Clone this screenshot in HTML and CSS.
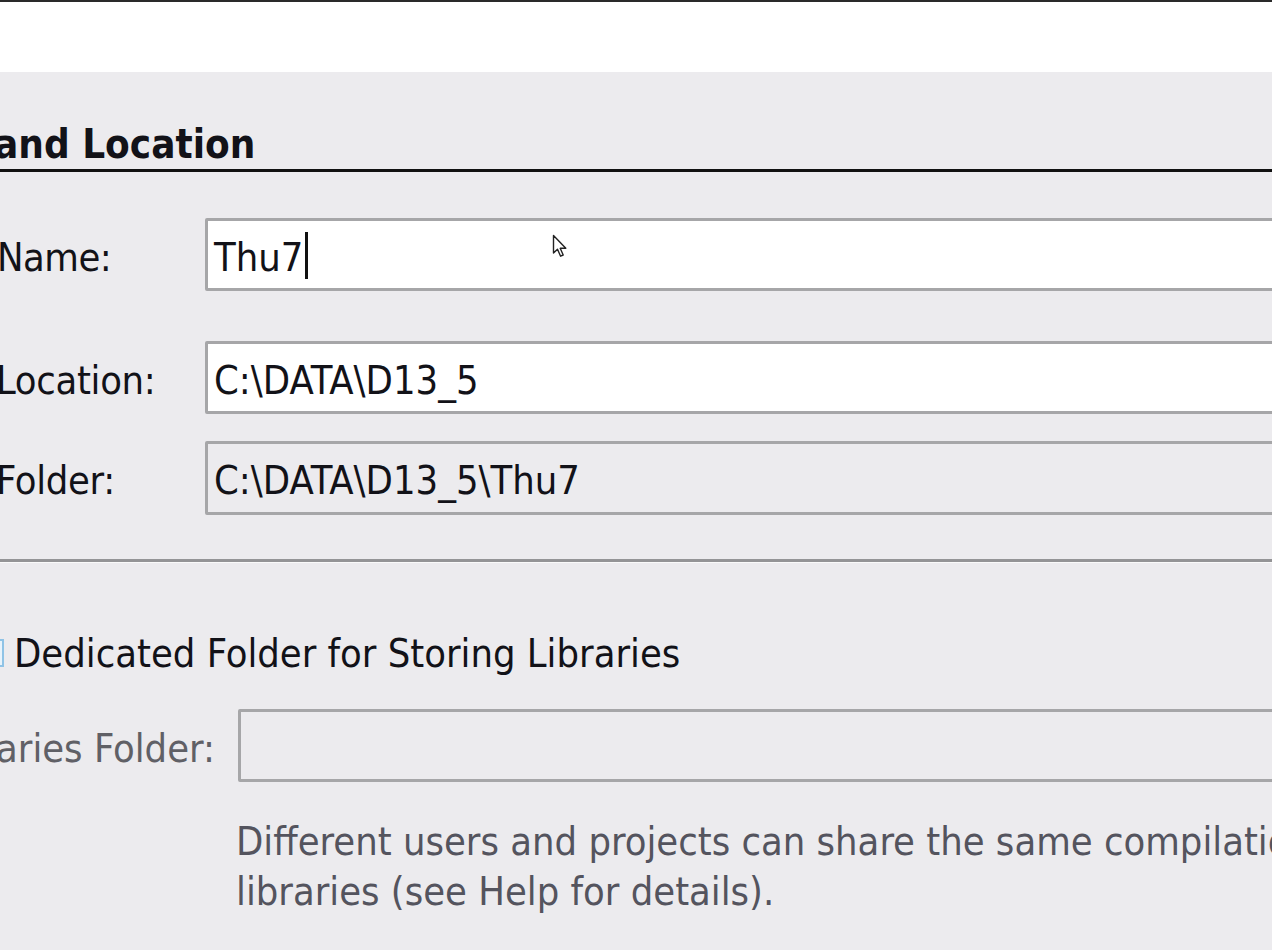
FILE: index.html
```html
<!DOCTYPE html>
<html>
<head>
<meta charset="utf-8">
<link rel="stylesheet" href="styles.css">
</head>
<body>
<div class="topline"></div>
<div class="banner"></div>
<div class="panel">
  <div class="heading"><span class="cut-heading">and Location</span></div>
  <div class="row row-name">
    <div class="label"><span class="cut-n">Name:</span></div>
    <div class="field editable"><span>Thu7</span><span class="caret"></span>
      <svg class="pointer" width="18" height="26" viewBox="0 0 18 26"><path d="M1.5 1.5 L1.5 19 L5.5 15.2 L8.6 22.2 L11.2 21 L8.2 14.3 L13.8 14.3 Z" fill="#fff" stroke="#222" stroke-width="1.4" stroke-linejoin="round"/></svg>
    </div>
  </div>
  <div class="row row-loc">
    <div class="label"><span class="cut-l">Location:</span></div>
    <div class="field editable">C:\DATA\D13_5</div>
  </div>
  <div class="row row-folder">
    <div class="label"><span class="cut-f">Folder:</span></div>
    <div class="field readonly">C:\DATA\D13_5\Thu7</div>
  </div>
  <div class="separator"></div>
  <div class="check-row"><span class="checkbox"></span><span class="check-label">Dedicated Folder for Storing Libraries</span></div>
  <div class="row lib-row">
    <div class="label disabled"><span class="cut-lib">aries Folder:</span></div>
    <div class="field readonly"></div>
  </div>
  <div class="help">Different users and projects can share the same compilation<br>libraries (see Help for details).</div>
</div>
</body>
</html>
```
FILE: styles.css
```css
html, body {
  margin: 0;
  padding: 0;
}
body {
  width: 1272px;
  height: 950px;
  overflow: hidden;
  background: #ecebee;
  font-family: "DejaVu Sans Condensed", "DejaVu Sans", sans-serif;
  font-size: 39.5px;
  color: #121218;
}
.topline {
  height: 2px;
  background: #2a2a2a;
}
.banner {
  height: 70px;
  background: #ffffff;
}
.panel {
  background: #ecebee;
  height: 878px;
  overflow: hidden;
}
.heading {
  font-weight: bold;
  font-size: 40px;
  line-height: 46px;
  padding-top: 49px;
  padding-bottom: 2px;
  border-bottom: 3px solid #111;
  white-space: nowrap;
}
.cut-heading {
  display: inline-block;
  margin-left: -6px;
}
.row {
  display: grid;
  grid-template-columns: 205px 1fr;
  height: 73px;
  width: calc(100% + 20px);
}
.row-name {
  margin-top: 46px;
}
.row-loc {
  margin-top: 50px;
}
.row-folder {
  margin-top: 27px;
  height: 74px;
}
.label {
  display: flex;
  align-items: center;
  padding-top: 4px;
  white-space: nowrap;
  overflow: hidden;
}
.cut-n { margin-left: -3px; letter-spacing: -0.5px; }
.cut-l { margin-left: -4px; letter-spacing: -0.3px; }
.cut-f { margin-left: -4px; letter-spacing: -0.3px; }
.cut-lib { margin-left: -4px; }
.field {
  position: relative;
  box-sizing: border-box;
  height: 100%;
  border: 3px solid #a6a6a8;
  border-radius: 2px;
  display: flex;
  align-items: center;
  padding: 4px 0 0 6px;
  white-space: nowrap;
}
.editable {
  background: #ffffff;
}
.readonly {
  background: #ecebee;
}
.caret {
  display: inline-block;
  width: 3px;
  height: 47px;
  background: #111;
  margin-left: 2px;
  margin-top: -2px;
}
.pointer {
  position: absolute;
  left: 344px;
  top: 13px;
}
.separator {
  margin-top: 44px;
  height: 3px;
  background: #949496;
  border-bottom: 1px solid #fafafa;
}
.check-row {
  display: flex;
  align-items: center;
  margin-top: 68px;
  height: 44px;
  white-space: nowrap;
}
.checkbox {
  display: inline-block;
  flex: none;
  width: 24px;
  height: 24px;
  margin-left: -24px;
  margin-right: 10px;
  border: 2px solid #8fc3e6;
  background: #e8f3fb;
}
.lib-row {
  grid-template-columns: 238px 1fr;
  margin-top: 34px;
}
.disabled {
  color: #606066;
}
.help {
  margin-left: 236px;
  margin-top: 34px;
  line-height: 50px;
  color: #54545e;
  white-space: nowrap;
}
```
